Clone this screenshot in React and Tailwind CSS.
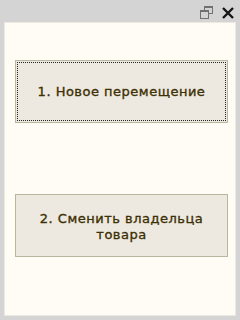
export default function App() {
  return (
    <div className="w-[240px] h-[320px] bg-[#d4d4d4] flex flex-col" style={{ fontFamily: '"DejaVu Sans", sans-serif' }}>
      <div className="h-[22px] flex items-center justify-end gap-[9px] pr-[6px]">
        <svg width="13" height="13" viewBox="0 0 13 13" className="mt-[3px]">
          <rect x="4.5" y="0.5" width="8" height="7" fill="none" stroke="#707070" />
          <line x1="4.5" y1="1.5" x2="12.5" y2="1.5" stroke="#707070" />
          <rect x="0.5" y="4.5" width="8" height="8" fill="#d4d4d4" stroke="#707070" />
          <line x1="0.5" y1="5.5" x2="8.5" y2="5.5" stroke="#707070" />
        </svg>
        <svg width="12" height="12" viewBox="0 0 12 12" className="mt-[3px]">
          <path d="M1 1 L11 11 M11 1 L1 11" stroke="#151515" strokeWidth="2.4" />
        </svg>
      </div>
      <div className="flex-1 mx-[4px] mb-[4px] bg-[#fffcf5] border border-[#ece9e0] flex flex-col items-start pl-[10px] pt-[37px]">
        <button className="w-[213px] h-[63px] bg-[#ede9e1] border border-[#b9b59f] p-[1px]">
          <div className="w-full h-full border border-dotted border-[#222] flex items-center justify-center text-[13px] tracking-[0.5px] [-webkit-text-stroke:0.35px_#3d3003] text-[#3d3003]">
            1. Новое перемещение
          </div>
        </button>
        <button className="mt-[71px] w-[213px] h-[63px] bg-[#ede9e1] border border-[#b9b59f] flex items-center justify-center text-[13px] leading-[16px] tracking-[0.5px] [-webkit-text-stroke:0.35px_#3d3003] text-[#3d3003] px-[20px] pt-[2px]">
          2. Сменить владельца товара
        </button>
      </div>
    </div>
  );
}
